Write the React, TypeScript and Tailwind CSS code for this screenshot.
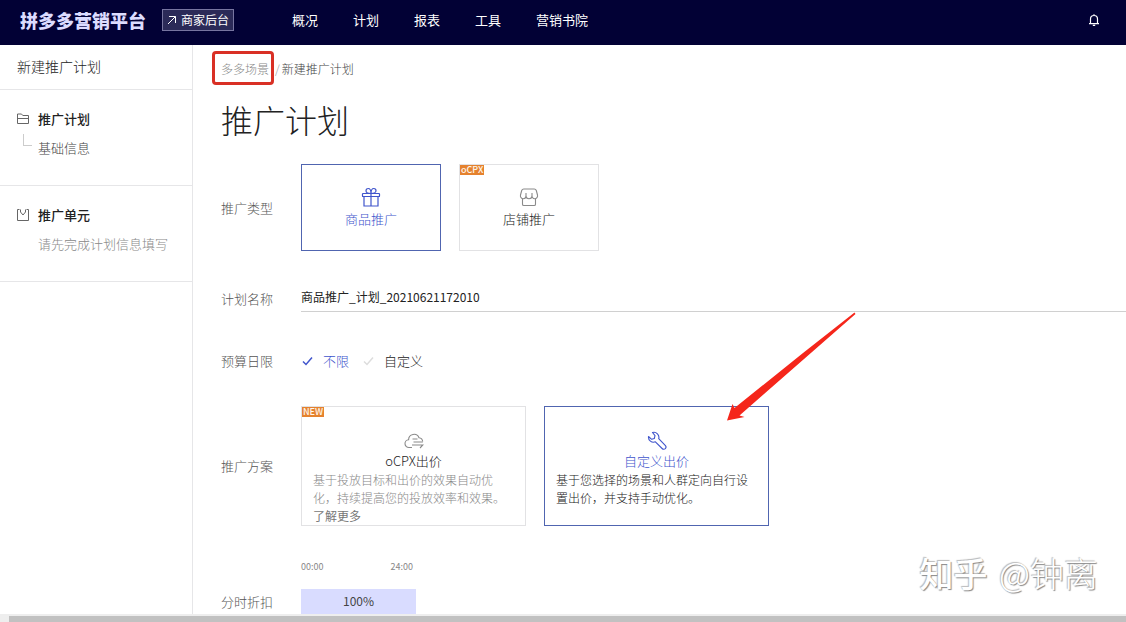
import { useState } from 'react'
import type { ReactNode } from 'react'

const navItems = ['概况', '计划', '报表', '工具', '营销书院']

function FolderIcon() {
  return (
    <svg className="h-3 w-3" viewBox="0 0 12 12" fill="none" stroke="#666" strokeWidth="1">
      <path d="M.5 10.5v-9.500h4l1.300 1.500h5.700v8z" />
      <path d="M.5 5.500h11" />
    </svg>
  )
}

function UnitIcon() {
  return (
    <svg className="h-3 w-3" viewBox="0 0 12 12" fill="none" stroke="#666" strokeWidth="1">
      <path d="M2.500.5h-2v11h11v-11h-2" />
      <path d="M3.500.5v2.500l2.500 3 2.500-3V.5" />
    </svg>
  )
}

function GiftIcon() {
  return (
    <svg className="h-5 w-5" viewBox="0 0 20 20" fill="none" stroke="currentColor" strokeWidth="1.200">
      <rect x="1.500" y="6.500" width="17" height="3" rx=".6" />
      <path d="M3 9.500v9.500h14v-9.500M10 6.500V19M10 6.500C6.500 6.500 5 5 5 3.700 5 2.100 6.200 1.500 7.200 1.500 9 1.500 10 3.500 10 6.500c0-3 1-5 2.800-5 1 0 2.200.6 2.200 2.200 0 1.300-1.500 2.800-5 2.800z" />
    </svg>
  )
}

function ShopIcon() {
  return (
    <svg className="h-5 w-5" viewBox="0 0 20 20" fill="none" stroke="#8a8a8a" strokeWidth="1.100">
      <path d="M4.800 2h10.400c1 0 1.800.6 2.100 1.500l1.200 4.500c.5 2-1 3.700-2.800 3.700-1.600 0-2.700-1.200-2.700-2.700 0 1.500-1.300 2.700-3 2.700S7 10.500 7 9c0 1.500-1.100 2.700-2.700 2.700C2.500 11.700 1 10 1.500 8l1.200-4.500C3 2.600 3.800 2 4.800 2z" />
      <path d="M7 9V6M13 9V6M3.500 11.700v5.500c0 .8.500 1.300 1.300 1.300h10.400c.8 0 1.300-.5 1.300-1.300v-5.500" />
    </svg>
  )
}

function CloudIcon() {
  return (
    <svg className="h-5 w-5" viewBox="0 0 20 20" fill="none" stroke="#8a8a8a" strokeWidth="1.100">
      <path d="M8 16.500H5.200a3.900 3.900 0 0 1-.6-7.800A5.400 5.400 0 0 1 15 6.700c2 .3 3.500 1.800 3.700 3.800" />
      <path d="M8.500 8h5M9.500 11h9.300M8 14h10.800l-2.800 3" />
    </svg>
  )
}

function WrenchIcon() {
  return (
    <svg className="h-5 w-5" viewBox="0 0 20 20" fill="none" stroke="currentColor" strokeWidth="1.100" strokeLinejoin="round">
      <path d="M5.500 1.500a5 5 0 0 1 6.200 6.200l6.500 6.700c1 1 1 2.300.1 3.200s-2.200.9-3.200-.1L8.400 10.800A5 5 0 0 1 1.500 5.500L4.700 8.300 7.300 7.500 8 4.600z" />
    </svg>
  )
}

function BellIcon() {
  return (
    <svg className="h-3 w-3" viewBox="0 0 12 12" fill="none" stroke="#fff" strokeWidth="1.200">
      <path d="M2.500 9.500V5a3.500 3.500 0 0 1 7 0v4.500M1 9.700h10M6 .3v1.200M4.800 11.400h2.400" />
    </svg>
  )
}

function Badge({ children }: { children: ReactNode }) {
  return (
    <span className="absolute left-0 top-0 bg-[#e5822e] px-px text-[9px] font-medium leading-[10px] text-orange-50">
      {children}
    </span>
  )
}

function Row({ label, htmlFor, children }: { label: string; htmlFor?: string; children: ReactNode }) {
  return (
    <div className="flex items-center">
      <label htmlFor={htmlFor} className="w-20 shrink-0 text-[#555]">
        {label}
      </label>
      {children}
    </div>
  )
}

export default function App() {
  const [type, setType] = useState('goods')
  const [name, setName] = useState('商品推广_计划_20210621172010')
  const [budget, setBudget] = useState('none')
  const [plan, setPlan] = useState('custom')

  const cardBorder = (active: boolean) => (active ? 'border-[#5065b0]' : 'border-[#e2e2e4]')

  return (
    <div className="relative flex min-h-screen flex-col overflow-hidden bg-white font-['Noto_Sans_CJK_SC',sans-serif] text-[13px] font-light leading-5 text-[#222]">
      <header className="flex h-[45px] items-center bg-[#020135] pb-1.5 pl-5 font-normal text-white">
        <span className="text-lg font-black text-[#dcdcff]">拼多多营销平台</span>
        <a href="#" className="ml-4 flex h-[22px] items-center border border-[#7775a0] bg-[#2b2a58] px-1 text-xs">
          <svg className="mr-1 h-2.5 w-2.5" viewBox="0 0 10 10" fill="none" stroke="currentColor">
            <path d="M1 9l7.500-7.500M2 1.500h6.500V8" />
          </svg>
          商家后台
        </a>
        <nav className="ml-[58px] flex gap-[35px]">
          {navItems.map(item => (
            <a key={item} href="#">{item}</a>
          ))}
        </nav>
        <button aria-label="通知" className="ml-auto mr-[26px]">
          <BellIcon />
        </button>
      </header>

      <div className="flex flex-1">
        <aside className="w-[193px] shrink-0 border-r border-[#e6e6e8]">
          <h2 className="border-b border-[#e6e6e8] px-[17px] pb-[13px] pt-[11px] text-sm">新建推广计划</h2>
          <section className="border-b border-[#e6e6e8] pb-[27px] pl-[17px] pt-[19px]">
            <h3 className="flex items-center gap-[9px] font-medium">
              <FolderIcon />
              推广计划
            </h3>
            <a href="#" className="mt-[9px] flex text-[#444]">
              <span className="mx-1.5 h-3 w-[9px] -translate-y-1 border-b border-l border-[#ccc]" />
              基础信息
            </a>
          </section>
          <section className="border-b border-[#e6e6e8] pb-[27px] pl-[17px] pt-[19px]">
            <h3 className="flex items-center gap-[9px] font-medium">
              <UnitIcon />
              推广单元
            </h3>
            <p className="mt-[9px] pl-[21px] text-[#888]">请先完成计划信息填写</p>
          </section>
        </aside>

        <main className="min-w-0 flex-1 pl-7 pt-[15px]">
          <div className="flex text-xs leading-[18px]">
            <a href="#" className="relative text-[#888]">
              多多场景
              <span className="absolute -bottom-[7px] -left-[9px] -right-[5px] -top-[9px] rounded-sm border-3 border-[#d93025]" />
            </a>
            <span className="ml-1.5 mr-0.5 text-[#999]">/</span>
            <span className="text-[#444]">新建推广计划</span>
          </div>
          <h1 className="mb-[21px] mt-[17px] text-[32px] leading-[48px]">推广计划</h1>

          <Row label="推广类型">
            <div className="flex gap-[18px]">
              <button
                onClick={() => setType('goods')}
                className={`flex h-[87px] w-[140px] flex-col items-center justify-center gap-0.5 border text-[#4055cc] ${cardBorder(type === 'goods')}`}
              >
                <GiftIcon />
                商品推广
              </button>
              <button
                onClick={() => setType('shop')}
                className={`relative flex h-[87px] w-[140px] flex-col items-center justify-center gap-0.5 border ${cardBorder(type === 'shop')}`}
              >
                <Badge>oCPX</Badge>
                <ShopIcon />
                店铺推广
              </button>
            </div>
          </Row>

          <div className="mt-[35px]">
            <Row label="计划名称" htmlFor="plan-name">
              <input
                id="plan-name"
                value={name}
                onChange={e => setName(e.target.value)}
                className="h-[26px] min-w-0 flex-1 border-b border-[#d0d0d0] pb-1 text-xs font-normal outline-none"
              />
            </Row>
          </div>

          <div className="mt-9">
            <Row label="预算日限">
              <div className="flex gap-3.5 pl-px pt-px leading-6">
                {[
                  { id: 'none', label: '不限' },
                  { id: 'custom', label: '自定义' },
                ].map(option => (
                  <label
                    key={option.id}
                    className={`flex items-center gap-[9px] ${budget === option.id ? 'text-[#4055cc]' : ''}`}
                  >
                    <input
                      type="radio"
                      name="budget"
                      className="sr-only"
                      checked={budget === option.id}
                      onChange={() => setBudget(option.id)}
                    />
                    <svg
                      className={`h-3 w-3 ${budget === option.id ? '' : 'text-[#ddd]'}`}
                      viewBox="0 0 12 12"
                      fill="none"
                      stroke="currentColor"
                      strokeWidth="1.500"
                    >
                      <path d="M1 6.500l3 3 6-7" />
                    </svg>
                    {option.label}
                  </label>
                ))}
              </div>
            </Row>
          </div>

          <div className="mt-[33px]">
            <Row label="推广方案">
              <div className="flex gap-[18px]">
                <label className={`relative h-[120px] w-[225px] border px-[11px] pt-6 ${cardBorder(plan === 'ocpx')}`}>
                  <input type="radio" name="plan" className="sr-only" checked={plan === 'ocpx'} onChange={() => setPlan('ocpx')} />
                  <Badge>NEW</Badge>
                  <span className="flex flex-col items-center">
                    <CloudIcon />
                    oCPX出价
                  </span>
                  <span className="block text-xs leading-[18px] text-[#888]">
                    基于投放目标和出价的效果自动优化，持续提高您的投放效率和效果。
                    <a href="#" className="block font-normal text-[#777]">了解更多</a>
                  </span>
                </label>
                <label className={`relative h-[120px] w-[225px] border px-[11px] pt-6 ${cardBorder(plan === 'custom')}`}>
                  <input type="radio" name="plan" className="sr-only" checked={plan === 'custom'} onChange={() => setPlan('custom')} />
                  <span className="flex flex-col items-center text-[#4055cc]">
                    <WrenchIcon />
                    自定义出价
                  </span>
                  <span className="block text-xs leading-[18px]">
                    基于您选择的场景和人群定向自行设置出价，并支持手动优化。
                  </span>
                  <svg className="absolute -right-[88px] -top-[95px] h-[110px] w-[130px]" viewBox="0 0 130 110" fill="#f5261b">
                    <path d="M128.500.5L129.500 2 13.500 103.500 18.500 105 1 108.500 6.500 92 8.500 96 77 41z" />
                  </svg>
                </label>
              </div>
            </Row>
          </div>

          <div className="ml-20 mt-8 flex w-28 justify-between text-[9px] font-normal leading-[18px] text-[#888]">
            <span>00:00</span>
            <span>24:00</span>
          </div>
          <div className="mt-[13px]">
            <Row label="分时折扣">
              <div className="h-[25px] w-[115px] bg-[#d9dcff] pt-1 text-center text-xs font-normal text-[#444]">100%</div>
            </Row>
          </div>
        </main>
      </div>

      <footer className="flex h-[9px] border-t-2 border-[#eee] bg-[#eee]">
        <span className="ml-[9px] flex-1 bg-[#c1c1c1]" />
      </footer>

      <div className="absolute bottom-7 right-7 text-[34px] leading-[44px] text-white [text-shadow:1px_1px_1px_#888,-1px_-1px_1px_#bbb]">
        <span className="mr-1 font-medium">知乎</span> @钟离
      </div>
    </div>
  )
}
